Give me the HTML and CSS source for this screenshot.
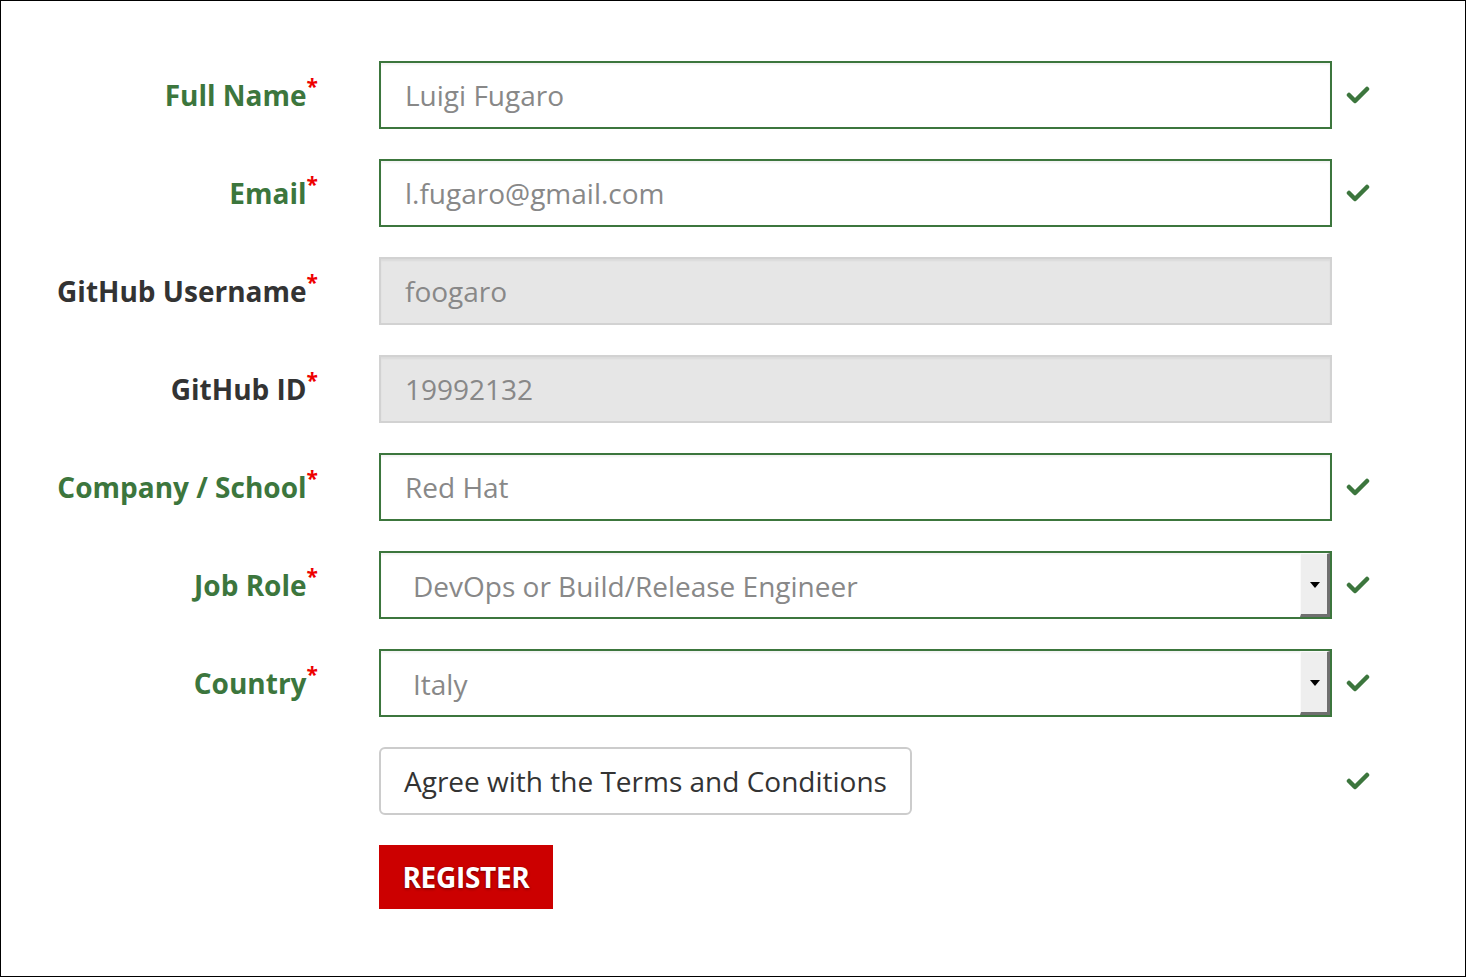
FILE: index.html
```html
<!DOCTYPE html>
<html lang="en">
<head>
    <meta charset="UTF-8">
    <title>Register</title>
    <link rel="stylesheet" href="styles.css">
</head>
<body>
    <div class="page">
        <form class="form">
            <div class="row ok">
                <label class="label">Full Name<sup>*</sup></label>
                <div class="field">Luigi Fugaro</div>
                <span class="check"><svg width="24" height="18" viewBox="0 0 24 18"><polyline points="3,9 9,15 21,3" fill="none" stroke="#3c763d" stroke-width="4.5" stroke-linecap="round" stroke-linejoin="round"/></svg></span>
            </div>
            <div class="row ok">
                <label class="label">Email<sup>*</sup></label>
                <div class="field">l.fugaro@gmail.com</div>
                <span class="check"><svg width="24" height="18" viewBox="0 0 24 18"><polyline points="3,9 9,15 21,3" fill="none" stroke="#3c763d" stroke-width="4.5" stroke-linecap="round" stroke-linejoin="round"/></svg></span>
            </div>
            <div class="row">
                <label class="label">GitHub Username<sup>*</sup></label>
                <div class="field disabled">foogaro</div>
                <span class="check"></span>
            </div>
            <div class="row">
                <label class="label">GitHub ID<sup>*</sup></label>
                <div class="field disabled">19992132</div>
                <span class="check"></span>
            </div>
            <div class="row ok">
                <label class="label">Company / School<sup>*</sup></label>
                <div class="field">Red Hat</div>
                <span class="check"><svg width="24" height="18" viewBox="0 0 24 18"><polyline points="3,9 9,15 21,3" fill="none" stroke="#3c763d" stroke-width="4.5" stroke-linecap="round" stroke-linejoin="round"/></svg></span>
            </div>
            <div class="row ok">
                <label class="label">Job Role<sup>*</sup></label>
                <div class="field select">
                    <span class="select-text">DevOps or Build/Release Engineer</span>
                    <span class="select-btn"><span class="arrow"></span></span>
                </div>
                <span class="check"><svg width="24" height="18" viewBox="0 0 24 18"><polyline points="3,9 9,15 21,3" fill="none" stroke="#3c763d" stroke-width="4.5" stroke-linecap="round" stroke-linejoin="round"/></svg></span>
            </div>
            <div class="row ok">
                <label class="label">Country<sup>*</sup></label>
                <div class="field select">
                    <span class="select-text">Italy</span>
                    <span class="select-btn"><span class="arrow"></span></span>
                </div>
                <span class="check"><svg width="24" height="18" viewBox="0 0 24 18"><polyline points="3,9 9,15 21,3" fill="none" stroke="#3c763d" stroke-width="4.5" stroke-linecap="round" stroke-linejoin="round"/></svg></span>
            </div>
            <div class="row">
                <span class="label"></span>
                <div class="terms-wrap"><button type="button" class="terms">Agree with the Terms and Conditions</button></div>
                <span class="check"><svg width="24" height="18" viewBox="0 0 24 18"><polyline points="3,9 9,15 21,3" fill="none" stroke="#3c763d" stroke-width="4.5" stroke-linecap="round" stroke-linejoin="round"/></svg></span>
            </div>
            <div class="actions">
                <button type="button" class="register">REGISTER</button>
            </div>
        </form>
    </div>
</body>
</html>
```

FILE: styles.css
```css
html, body {
    margin: 0;
    padding: 0;
    background: #fff;
}
body {
    font-family: "Open Sans", Arial, sans-serif;
}
.page {
    box-sizing: border-box;
    width: 1466px;
    height: 977px;
    border: 1px solid #000;
    padding-top: 60px;
}
.form {
    display: flex;
    flex-direction: column;
    gap: 30px;
}
.row {
    display: grid;
    grid-template-columns: 317px 953px 40px;
    column-gap: 61px;
    align-items: center;
    height: 68px;
}
.row .check {
    margin-left: -47px;
    display: flex;
    align-items: center;
}
.label {
    text-align: right;
    font-weight: bold;
    font-size: 28px;
    color: #333;
}
.row.ok .label {
    color: #3c763d;
}
.label sup {
    color: #e00;
    font-size: 21px;
    font-weight: bold;
    vertical-align: top;
    position: relative;
    top: -4px;
    margin-left: 0;
}
.field {
    box-sizing: border-box;
    height: 68px;
    border: 2px solid #3c763d;
    padding: 0 24px;
    display: flex;
    align-items: center;
    font-size: 28px;
    color: #888;
    background: #fff;
    box-shadow: inset 0 2px 2px rgba(0, 0, 0, 0.05);
}
.field.disabled {
    background: #e6e6e6;
    border-color: #d2d2d2;
}
.field.select {
    padding: 0 0 0 32px;
}
.select-text {
    flex: 1;
    padding-top: 2px;
}
.select-btn {
    box-sizing: border-box;
    width: 30px;
    height: 64px;
    background: #eee;
    border-top: 1px solid #fafafa;
    border-left: 1px solid #fafafa;
    border-right: 3px solid #6f6f6f;
    border-bottom: 3px solid #6f6f6f;
    display: flex;
    align-items: center;
    justify-content: center;
}
.arrow {
    width: 0;
    height: 0;
    border-left: 5px solid transparent;
    border-right: 5px solid transparent;
    border-top: 6px solid #000;
    margin-left: 2px;
    margin-top: 2px;
}
.terms-wrap {
    display: flex;
}
.terms {
    box-sizing: border-box;
    height: 68px;
    padding: 0 23px;
    border: 2px solid #ccc;
    border-radius: 6px;
    background: #fff;
    color: #333;
    font-family: "Open Sans", Arial, sans-serif;
    font-size: 28px;
}
.actions {
    padding-left: 378px;
}
.register {
    height: 64px;
    width: 174px;
    padding: 0;
    border: none;
    background: #cc0000;
    color: #fff;
    font-family: "Open Sans", Arial, sans-serif;
    font-weight: bold;
    font-size: 28px;
    letter-spacing: -0.3px;
    text-shadow: 0 1px 3px rgba(0, 0, 0, 0.45);
}
```
